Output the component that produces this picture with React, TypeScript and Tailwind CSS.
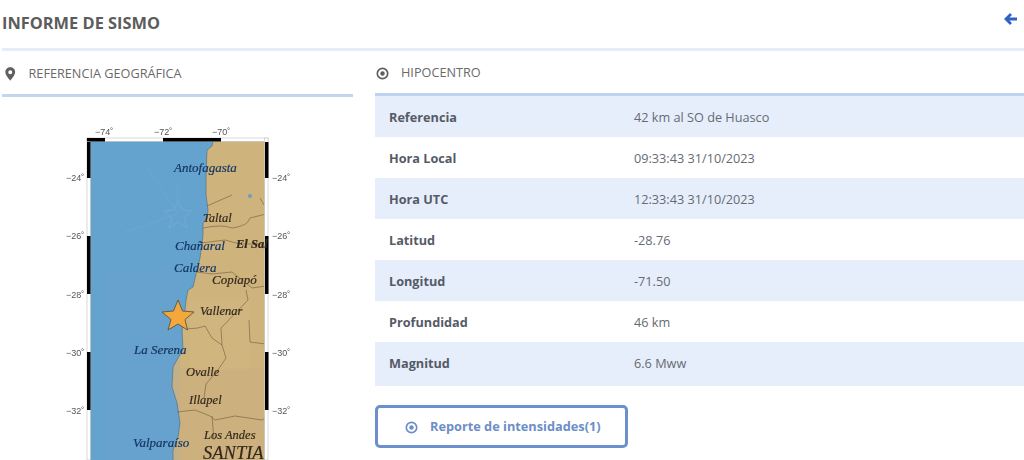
const rows = [
  ["Referencia", "42 km al SO de Huasco"],
  ["Hora Local", "09:33:43 31/10/2023"],
  ["Hora UTC", "12:33:43 31/10/2023"],
  ["Latitud", "-28.76"],
  ["Longitud", "-71.50"],
  ["Profundidad", "46 km"],
  ["Magnitud", "6.6 Mww"],
];

const coast =
  "213,141 212,146 207,150 206,177 206,195 208,210 207,218 203,223 203,235 202,243 200,258 197,270 193,287 188,290 186,300 185,310 184,322 182,330 183,350 178,358 173,367 172,387 177,403 180,423 178,437 173,450 173,460";

const blueLabels: [string, number, number][] = [
  ["Antofagasta", 174, 172],
  ["Chañaral", 175, 250],
  ["Caldera", 174, 272],
  ["La Serena", 134, 354],
  ["Valparaíso", 133, 447],
];

const brownLabels: [string, number, number, number, boolean][] = [
  ["Taltal", 203, 222, 12.5, false],
  ["El Sal", 236, 248, 12.5, true],
  ["Copiapó", 212, 284, 13, false],
  ["Vallenar", 200, 315, 12.5, false],
  ["Ovalle", 186, 376, 12.5, false],
  ["Illapel", 189, 404, 12.5, false],
  ["Los Andes", 204, 439, 12.5, false],
  ["SANTIA", 203, 459, 18.5, false],
];

const latLabels: [string, number][] = [
  ["−24˚", 181],
  ["−26˚", 239],
  ["−28˚", 298],
  ["−30˚", 356],
  ["−32˚", 414],
];

function DotCircle({ className }: { className: string }) {
  return (
    <svg viewBox="0 0 14 14" className={className} fill="none">
      <circle cx="7" cy="7" r="5.6" stroke="currentColor" strokeWidth="1.8" />
      <circle cx="7" cy="7" r="2.4" fill="currentColor" />
    </svg>
  );
}

function Pin({ className }: { className: string }) {
  return (
    <svg viewBox="0 0 12 16" className={className}>
      <path
        fillRule="evenodd"
        fill="currentColor"
        d="M6 0.3C2.8 0.3 0.4 2.7 0.4 5.8C0.4 9.2 4.2 13.4 6 15.7C7.8 13.4 11.6 9.2 11.6 5.8C11.6 2.7 9.2 0.3 6 0.3ZM6 3.6A2.3 2.3 0 1 1 6 8.2A2.3 2.3 0 1 1 6 3.6Z"
      />
    </svg>
  );
}

function BackArrow({ className }: { className: string }) {
  return (
    <svg viewBox="0 0 14 14" className={className} fill="none">
      <path d="M7 2L2 7L7 12M2.5 7H13" stroke="currentColor" strokeWidth="2.8" strokeLinejoin="miter" />
    </svg>
  );
}

function QuakeMap() {
  return (
    <svg viewBox="60 120 240 340" className="h-[340px] w-[240px] blur-[0.3px]">
      {/* sea and land */}
      <rect x="88" y="140" width="179" height="320" fill="#65a3cf" />
      <polygon points={`${coast} 266,460 266,141`} fill="#cfb37d" />
      <rect x="104" y="270" width="76" height="190" fill="#7a9fd0" opacity="0.12" />
      <rect x="180" y="368" width="86" height="92" fill="#b9a27f" opacity="0.15" />
      <rect x="190" y="300" width="60" height="70" fill="#dcc084" opacity="0.2" />
      <polygon
        points="178,200 182,210 192,211 184,218 187,228 178,222 169,228 172,218 164,211 174,210"
        fill="none"
        stroke="#8dbbdc"
        strokeWidth="1"
        opacity="0.3"
      />
      <path d="M122 233L178 214M178 214L145 165M178 214L178 180" stroke="#71a9d2" fill="none" opacity="0.5" />
      <polyline points={coast} fill="none" stroke="#52718a" strokeWidth="0.7" />

      {/* region borders */}
      <g fill="none" stroke="#6f5c3f" strokeWidth="0.6">
        <path d="M203 228 Q222 224 232 228 Q248 226 250 218 Q258 216 266 214" />
        <path d="M201 243 L225 240 L240 244 L262 244 L266 252" />
        <path d="M197 272 L212 274 L232 272 L252 288 L266 286" />
        <path d="M186 329 L198 328 L205 326 L212 338 L222 345 L226 358 L218 370 L206 384 L204 398" />
        <path d="M222 345 L221 328 L248 300 L246 290" />
        <path d="M250 342 L266 344 M249 320 L250 342" />
        <path d="M177 412 L195 410 L210 416 L215 420 L235 416 L262 420 L266 418" />
        <path d="M212 416 L214 440" />
        <path d="M260 198 L264 205 M207 206 L232 195" />
      </g>
      <circle cx="250" cy="196" r="2" fill="#6a9fc0" />

      {/* frame */}
      <g fill="#fff" stroke="#b4b4b4" strokeWidth="0.5">
        <rect x="87" y="138" width="181" height="3.5" />
        <rect x="87" y="138" width="3.5" height="322" />
        <rect x="264.5" y="138" width="3.5" height="322" />
      </g>
      <g fill="#000">
        <rect x="87" y="138" width="18" height="3.5" />
        <rect x="163" y="138" width="58" height="3.5" />
        <rect x="87" y="142" width="3.5" height="36" />
        <rect x="87" y="236" width="3.5" height="58" />
        <rect x="87" y="352" width="3.5" height="58" />
        <rect x="265" y="142" width="3.5" height="36" />
        <rect x="265" y="236" width="3.5" height="58" />
        <rect x="265" y="352" width="3.5" height="58" />
      </g>

      {/* axis labels */}
      <g fill="#555" fontSize="9" fontFamily="'Liberation Sans', sans-serif">
        <text x="95" y="135">−74˚</text>
        <text x="154" y="135">−72˚</text>
        <text x="212" y="135">−70˚</text>
        {latLabels.map(([label, y]) => (
          <g key={label}>
            <text x="66" y={y}>{label}</text>
            <text x="272" y={y}>{label}</text>
          </g>
        ))}
      </g>

      {/* towns */}
      <g fontFamily="'Liberation Serif', serif" fontStyle="italic">
        {blueLabels.map(([label, x, y]) => (
          <text key={label} x={x} y={y} fontSize="13" fill="#143760" stroke="#143760" strokeWidth="0.2">{label}</text>
        ))}
      </g>
      <g fontFamily="'Liberation Serif', serif" fontStyle="italic" fill="#33281e" stroke="#33281e" strokeWidth="0.2">
        {brownLabels.map(([label, x, y, size, bold]) => (
          <text key={label} x={x} y={y} fontSize={size} fontWeight={bold ? "bold" : "normal"}>{label}</text>
        ))}
      </g>

      <polygon
        points="178,300 182.5,311 194,312 185,319.5 187.5,330 178,324 168,330 171,319.5 162,312 173.5,311"
        fill="#f4a83c"
        stroke="#5c5540"
        strokeWidth="0.9"
      />
    </svg>
  );
}

export default function App() {
  return (
    <div className="h-[460px] w-[1024px] overflow-hidden bg-white pl-[2px] font-['Open_Sans',sans-serif] text-[#666]">
      <div className="flex h-[51px] items-start justify-between border-b-[3px] border-[#e6edfa] pt-[13px]">
        <h1 className="text-[16.4px] leading-[20px] font-bold text-[#5c5c5c]">INFORME DE SISMO</h1>
        <BackArrow className="mt-[-1px] mr-[6px] h-[14px] w-[14px] text-[#2f62c4]" />
      </div>

      <div className="flex">
        <div className="w-[351px]">
          <div className="flex h-[46px] items-center border-b-[3px] border-[#c5d4ef] pt-[2px] text-[12.7px] text-[#6a6a6a]">
            <Pin className="ml-[3px] h-[14px] w-[10.5px] text-[#5f5f5f]" />
            <span className="ml-[13px]">REFERENCIA GEOGRÁFICA</span>
          </div>
          <div className="pt-[23px] pl-[58px]">
            <QuakeMap />
          </div>
        </div>

        <div className="ml-[22px] flex-1">
          <div className="flex h-[42px] items-center pt-[2px] text-[12.7px] text-[#6a6a6a]">
            <DotCircle className="ml-[1px] h-[13px] w-[13px] text-[#5f5f5f]" />
            <span className="ml-[12px]">HIPOCENTRO</span>
          </div>
          <div className="border-t-[3px] border-[#bcd3ef]">
            {rows.map(([label, value], i) => (
              <div
                key={label}
                className={`flex items-center text-[12.7px] ${i === 6 ? "h-[44px]" : "h-[41px] pt-[2px]"} ${i % 2 === 0 ? "bg-[#e7eefb]" : "bg-white"}`}
              >
                <span className="w-[259px] pl-[14px] font-bold text-[#555b66]">{label}</span>
                <span className="text-[#666b73]">{value}</span>
              </div>
            ))}
          </div>
          <button className="mt-[19px] flex h-[43px] w-[253px] items-center rounded-[5px] border-[3px] border-[#6b90cb] pt-[1px] pl-[27px] text-[12.75px] font-bold text-[#6b8ec8]">
            <DotCircle className="h-[13px] w-[13px]" />
            <span className="ml-[12px]">Reporte de intensidades(1)</span>
          </button>
        </div>
      </div>
    </div>
  );
}
